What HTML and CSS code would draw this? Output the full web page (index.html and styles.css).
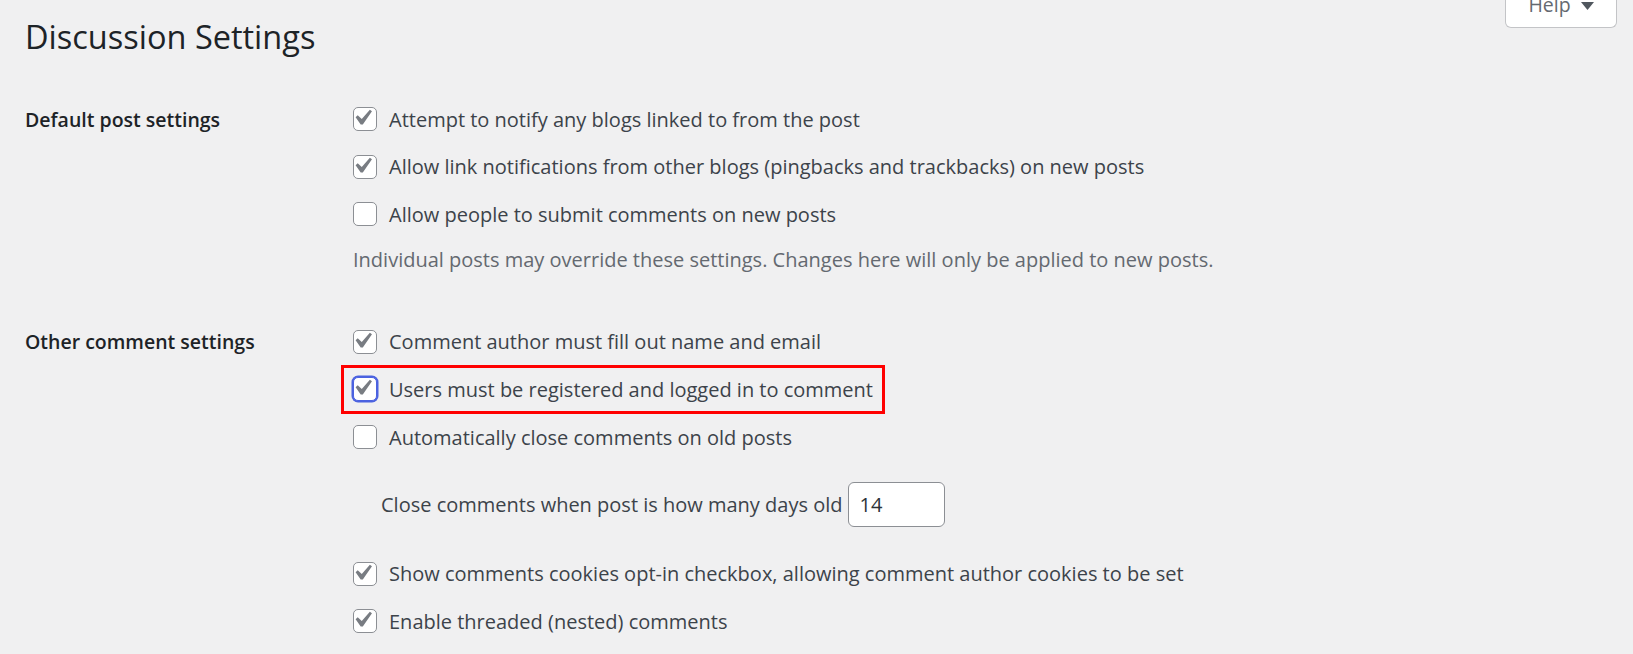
FILE: index.html
```html
<!DOCTYPE html>
<html lang="en">
<head>
<meta charset="utf-8">
<title>Discussion Settings</title>
<link rel="stylesheet" href="styles.css">
</head>
<body>
<div class="wrap">
  <header class="top">
    <h1>Discussion Settings</h1>
    <button class="help" type="button"><span>Help</span><svg class="tri" viewBox="0 0 13 8" width="13" height="8"><path d="M0 0H13L6.5 8Z"/></svg></button>
  </header>

  <section class="group g1">
    <div class="th">Default post settings</div>
    <div class="td">
      <label class="opt"><span class="cb"><svg viewBox="4.76 3.81 13.33 13.33"><path d="M14.83 4.89l1.34.94-5.81 8.38H9.02L5.78 9.67l1.34-1.250 2.57 2.4z"/></svg></span>Attempt to notify any blogs linked to from the post</label>
      <label class="opt"><span class="cb"><svg viewBox="4.76 3.81 13.33 13.33"><path d="M14.83 4.89l1.34.94-5.81 8.38H9.02L5.78 9.67l1.34-1.250 2.57 2.4z"/></svg></span>Allow link notifications from other blogs (pingbacks and trackbacks) on new posts</label>
      <label class="opt"><span class="cb"></span>Allow people to submit comments on new posts</label>
      <p class="desc">Individual posts may override these settings. Changes here will only be applied to new posts.</p>
    </div>
  </section>

  <section class="group g2">
    <div class="th">Other comment settings</div>
    <div class="td">
      <label class="opt first"><span class="cb"><svg viewBox="4.76 3.81 13.33 13.33"><path d="M14.83 4.89l1.34.94-5.81 8.38H9.02L5.78 9.67l1.34-1.250 2.57 2.4z"/></svg></span>Comment author must fill out name and email</label>
      <label class="opt mark"><span class="cb focus"><svg viewBox="4.76 3.81 13.33 13.33"><path d="M14.83 4.89l1.34.94-5.81 8.38H9.02L5.78 9.67l1.34-1.250 2.57 2.4z"/></svg></span>Users must be registered and logged in to comment</label>
      <label class="opt"><span class="cb"></span>Automatically close comments on old posts</label>
      <label class="close">Close comments when post is how many days old <input class="num" type="text" value="14"></label>
      <label class="opt after"><span class="cb"><svg viewBox="4.76 3.81 13.33 13.33"><path d="M14.83 4.89l1.34.94-5.81 8.38H9.02L5.78 9.67l1.34-1.250 2.57 2.4z"/></svg></span>Show comments cookies opt-in checkbox, allowing comment author cookies to be set</label>
      <label class="opt"><span class="cb"><svg viewBox="4.76 3.81 13.33 13.33"><path d="M14.83 4.89l1.34.94-5.81 8.38H9.02L5.78 9.67l1.34-1.250 2.57 2.4z"/></svg></span>Enable threaded (nested) comments</label>
    </div>
  </section>
</div>
</body>
</html>
```

FILE: styles.css
```css
html, body {
  margin: 0;
  padding: 0;
}

body {
  background: #f0f0f1;
  color: #3c434a;
  font-family: "Open Sans", "Noto Sans", "DejaVu Sans", sans-serif;
  font-size: 20px;
  overflow: hidden;
}

.wrap {
  padding-left: 25px;
}

.top {
  display: flex;
  align-items: flex-start;
}

h1 {
  margin: 16.5px 0 0;
  font-size: 32.5px;
  font-weight: 400;
  line-height: 40px;
  color: #1d2327;
}

.help {
  margin-left: auto;
  margin-right: 16px;
  width: 112px;
  height: 28.3px;
  box-sizing: border-box;
  background: #fff;
  border: 1px solid #c3c4c7;
  border-top: none;
  border-radius: 0 0 6px 6px;
  display: flex;
  align-items: flex-end;
  justify-content: center;
  gap: 10px;
  padding: 0 0 12.6px;
  font-family: inherit;
  font-size: 19.5px;
  line-height: 20px;
  color: #646970;
}

.help .tri {
  fill: #50575e;
  margin-bottom: 4.7px;
  flex: none;
}

.group {
  display: grid;
  grid-template-columns: 328px 1fr;
}

.g1 {
  margin-top: 39px;
}

.g2 {
  margin-top: 42.5px;
}

.th {
  height: 47.5px;
  display: flex;
  align-items: center;
  font-size: 19.5px;
  font-weight: 600;
  color: #1d2327;
}

.opt {
  display: flex;
  align-items: center;
  gap: 12px;
  height: 47.5px;
  white-space: nowrap;
}

.opt.first {
  height: 47.3px;
}

.opt.mark {
  width: fit-content;
  height: 48.4px;
  box-sizing: border-box;
  border: 3px solid #ff0000;
  margin-left: -12px;
  padding: 0 9px;
}

.cb {
  flex: none;
  width: 24px;
  height: 24px;
  box-sizing: border-box;
  background: #fff;
  border: 1.5px solid #8c8f94;
  border-radius: 5px;
  display: flex;
}

.cb svg {
  width: 21px;
  height: 21px;
  fill: #787c82;
}

.cb.focus {
  border-color: #4b62e0;
  box-shadow: 0 0 0 1.5px #4b62e0;
}

.desc {
  margin: 7.4px 0 0;
  line-height: 30px;
  color: #646970;
}

.close {
  display: flex;
  align-items: center;
  gap: 5px;
  height: 44.3px;
  margin-top: 21.4px;
  padding-left: 28px;
  white-space: nowrap;
}

.num {
  width: 97px;
  height: 44.3px;
  box-sizing: border-box;
  border: 1.5px solid #8c8f94;
  border-radius: 6px;
  background: #fff;
  padding: 0 11px;
  font-family: inherit;
  font-size: 20px;
  color: #2c3338;
  margin: 0;
}

.opt.after {
  margin-top: 23.3px;
}
```
